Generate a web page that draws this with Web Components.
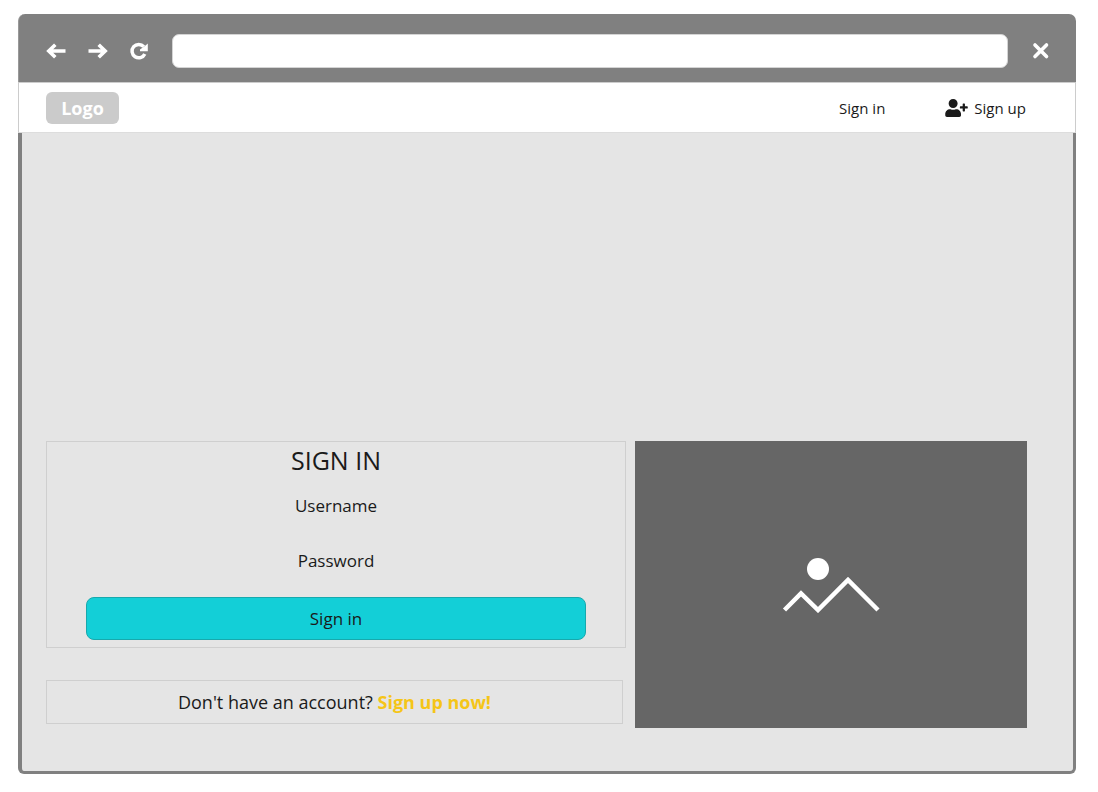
<!DOCTYPE html>
<html lang="en">
<head>
<meta charset="utf-8">
<meta name="viewport" content="width=device-width, initial-scale=1">
<title>Sign in</title>
<style>
  html { background: #fff; }
  body { margin: 0; color: #1a1a1a; font-family: "Open Sans", "Noto Sans", sans-serif; font-size: 16px; }
</style>
</head>
<body>
<browser-window>
  <site-nav></site-nav>
  <sign-in-page>
    <sign-in-form></sign-in-form>
    <sign-up-prompt></sign-up-prompt>
    <picture-placeholder slot="picture"></picture-placeholder>
  </sign-in-page>
</browser-window>
<script>
const define = (name, html) => {
  const template = document.createElement('template');
  template.innerHTML = '<style>*{box-sizing:border-box}</style>' + html;
  customElements.define(name, class extends HTMLElement {
    constructor() {
      super();
      this.attachShadow({ mode: 'open' }).append(template.content.cloneNode(true));
    }
  });
};

define('browser-window', `
  <style>
    :host { display: flex; flex-direction: column; box-sizing: border-box; min-height: 100vh; padding: 14px 22px 18px 18px; }
    header { display: flex; align-items: center; height: 68px; padding: 0 24px 0 26px; background: #808080; border-radius: 7px 7px 0 0; border-left: 1px solid #999; }
    .tools { display: flex; gap: 20px; }
    button { display: block; width: 22px; height: 22px; padding: 0; border: 0; background: none; color: #fff; }
    svg { display: block; width: 22px; height: 22px; }
    input { flex: 1; min-width: 0; height: 34px; margin: 6px 22px 0 21px; padding: 0 10px; border: 1px solid #d4d4d4; border-radius: 7px; background: #fff; font: inherit; }
    .tools, .close { margin-top: 5px; }
  </style>
  <header>
    <div class="tools">
      <button type="button" aria-label="Back"><svg viewBox="0 0 22 22" fill="none" stroke="currentColor" stroke-width="3.600"><path d="M20.500 11H5M10.300 4.700L3.800 11L10.300 17.300"/></svg></button>
      <button type="button" aria-label="Forward"><svg viewBox="0 0 22 22" fill="none" stroke="currentColor" stroke-width="3.600"><path d="M1.500 11H17M11.700 4.700L18.200 11L11.700 17.300"/></svg></button>
      <button type="button" aria-label="Reload"><svg viewBox="0 0 22 22" fill="none" stroke="currentColor" stroke-width="3.500"><path d="M15.800 14A6.700 6.700 0 1 1 14.800 6.700"/><path d="M18.800 3.500V11.300H11V9.500L16.500 5.500Z" fill="currentColor" stroke="none"/></svg></button>
    </div>
    <input type="text" aria-label="Address">
    <button class="close" type="button" aria-label="Close"><svg viewBox="0 0 22 22" fill="none" stroke="currentColor" stroke-width="3.600" stroke-linecap="round"><path d="M5 5L16.500 16.500M16.500 5L5 16.500"/></svg></button>
  </header>
  <slot></slot>
`);

define('site-nav', `
  <style>
    :host { display: block; }
    nav { display: flex; align-items: center; height: 51px; padding: 0 49px 0 27px; background: #fff; border: 1px solid #ccc; border-bottom-color: #ddd; font-size: 15px; line-height: 20px; }
    a { display: flex; align-items: center; color: inherit; text-decoration: none; }
    .logo { justify-content: center; width: 73px; height: 32px; margin-right: auto; border-radius: 6px; background: #cbcbcb; color: #fff; font-size: 18px; font-weight: 700; }
    .up { gap: 6px; margin-left: 60px; }
    svg { width: 23px; height: 18px; }
  </style>
  <nav>
    <a class="logo" href="#">Logo</a>
    <a href="#">Sign in</a>
    <a class="up" href="#"><svg viewBox="0 0 640 512" fill="currentColor" aria-hidden="true"><path d="M624 208h-64v-64c0-8.800-7.200-16-16-16h-32c-8.800 0-16 7.200-16 16v64h-64c-8.800 0-16 7.200-16 16v32c0 8.800 7.200 16 16 16h64v64c0 8.800 7.200 16 16 16h32c8.800 0 16-7.200 16-16v-64h64c8.800 0 16-7.200 16-16v-32c0-8.800-7.200-16-16-16zM224 256c70.700 0 128-57.300 128-128S294.700 0 224 0 96 57.300 96 128s57.300 128 128 128zm89.600 32h-16.700c-22.200 10.200-46.900 16-72.900 16s-50.600-5.800-72.900-16h-16.700C60.200 288 0 348.200 0 422.400V464c0 26.500 21.500 48 48 48h352c26.500 0 48-21.500 48-48v-41.600c0-74.200-60.200-134.400-134.400-134.400z"/></svg>Sign up</a>
  </nav>
`);

define('sign-in-page', `
  <style>
    :host { display: flex; flex: 1; flex-direction: column; }
    main { display: grid; flex: 1; align-content: end; grid-template-columns: minmax(0, 580fr) minmax(0, 392fr); gap: 9px; padding: 24px 46px 43px 24px; background: #e5e5e5; border: solid #808080; border-width: 0 3px 3px 4px; border-radius: 0 0 6px 6px; }
    .forms { display: flex; flex-direction: column; gap: 32px; }
  </style>
  <main>
    <div class="forms"><slot></slot></div>
    <slot name="picture"></slot>
  </main>
`);

define('sign-in-form', `
  <style>
    :host { display: block; }
    form { display: flex; flex-direction: column; padding: 0 39px 7px; border: 1px solid #cfcfcf; text-align: center; font-size: 17px; }
    h1 { margin: 0 0 16px; font-size: 25px; font-weight: 400; line-height: 36px; }
    .fields { display: grid; gap: 7px; }
    label { display: block; line-height: 24px; }
    input { display: block; width: 100%; height: 24px; padding: 0 8px; border: 0; background: transparent; font: inherit; text-align: center; }
    button { height: 43px; padding: 0; border: 1px solid #17a9ad; border-radius: 8px; background: #13cfd7; color: inherit; font: inherit; }
  </style>
  <form>
    <h1>SIGN IN</h1>
    <div class="fields">
      <div><label for="username">Username</label><input id="username" type="text" autocomplete="username"></div>
      <div><label for="password">Password</label><input id="password" type="password" autocomplete="current-password"></div>
    </div>
    <button type="button">Sign in</button>
  </form>
`);

define('sign-up-prompt', `
  <style>
    :host { display: block; margin-right: 3px; }
    p { margin: 0; padding: 9px; border: 1px solid #cfcfcf; font-size: 18px; line-height: 24px; text-align: center; }
    a { color: #f5c518; font-weight: 700; text-decoration: none; }
  </style>
  <p>Don't have an account? <a href="#">Sign up now!</a></p>
`);

define('picture-placeholder', `
  <style>
    :host { display: grid; place-items: center; box-sizing: border-box; min-height: 287px; background: #666; }
    svg { width: 98px; height: 56px; }
  </style>
  <svg viewBox="0 0 98 56" role="img" aria-label="Picture"><circle cx="36" cy="12" r="11" fill="#fff"/><path d="M2.500 53L19 36.500L36 53L66 23L96 53" fill="none" stroke="#fff" stroke-width="4.500"/></svg>
`);
</script>
</body>
</html>
